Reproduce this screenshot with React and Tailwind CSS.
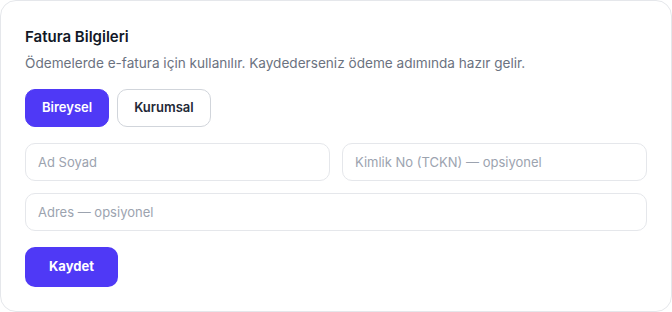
import React from "react";

export default function App() {
  return (
    <div className="w-[672px] h-[312px] bg-white" style={{ fontFamily: "Inter, 'Noto Sans', sans-serif" }}>
      <div className="w-[672px] h-[312px] border border-[#e5e7eb] rounded-2xl bg-white p-6 flex flex-col">
        <h2 className="text-[15px] leading-6 font-semibold text-[#111827]">Fatura Bilgileri</h2>
        <p className="mt-1 text-[13.6px] leading-5 text-[#6b7280]">
          Ödemelerde e-fatura için kullanılır. Kaydederseniz ödeme adımında hazır gelir.
        </p>
        <div className="mt-4 flex gap-2">
          <button className="h-[38px] px-4 rounded-[10px] border border-[#4f39f6] bg-[#4f39f6] text-white text-[13px] font-semibold">
            Bireysel
          </button>
          <button className="h-[38px] px-4 rounded-[10px] border border-[#d1d5db] bg-white text-[#1f2937] text-[13px] font-semibold">
            Kurumsal
          </button>
        </div>
        <div className="mt-4 grid grid-cols-2 gap-3">
          <input
            className="h-[38px] px-3 rounded-[10px] border border-[#e5e7eb] text-[13px] text-[#111827] placeholder:text-[#9ca3af] outline-none"
            placeholder="Ad Soyad"
          />
          <input
            className="h-[38px] px-3 rounded-[10px] border border-[#e5e7eb] text-[13px] text-[#111827] placeholder:text-[#9ca3af] outline-none"
            placeholder="Kimlik No (TCKN) — opsiyonel"
          />
        </div>
        <input
          className="mt-3 h-[38px] px-3 rounded-[10px] border border-[#e5e7eb] text-[13px] text-[#111827] placeholder:text-[#9ca3af] outline-none"
          placeholder="Adres — opsiyonel"
        />
        <div className="mt-4">
          <button className="h-10 px-6 rounded-[10px] bg-[#4f39f6] text-white text-[13px] font-bold">
            Kaydet
          </button>
        </div>
      </div>
    </div>
  );
}
